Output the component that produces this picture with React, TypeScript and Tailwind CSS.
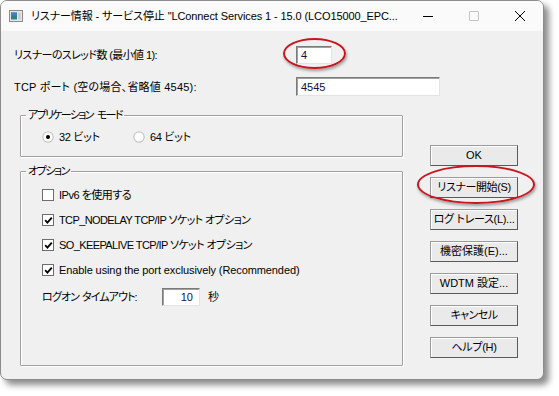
const font = "font-['Liberation_Sans','Noto_Sans_CJK_JP',sans-serif] [font-feature-settings:'palt']";

function TextBox({ value, className }: { value: string; className: string }) {
  return (
    <div
      className={`flex items-center bg-white border border-t-[#7a7a7a] border-l-[#7a7a7a] border-r-[#e3e3e3] border-b-[#e3e3e3] shadow-[inset_1px_1px_0_#a0a0a0] text-[11px] text-[#10104a] ${className}`}
    >
      {value}
    </div>
  );
}

function Radio({ checked }: { checked?: boolean }) {
  return (
    <svg width="12" height="12" viewBox="0 0 12 12" className="shrink-0">
      <circle cx="6" cy="6" r="5.5" fill="#a0a0a0" />
      <circle cx="6" cy="6" r="4.8" fill="#fff" stroke="#e3e3e3" strokeWidth="0.6" />
      {checked && <circle cx="6" cy="6" r="2" fill="#000" />}
    </svg>
  );
}

function Check({ checked }: { checked?: boolean }) {
  return (
    <div className="w-[12px] h-[12px] shrink-0 bg-white border border-[#6d6d6d] flex items-center justify-center">
      {checked && (
        <svg width="9" height="9" viewBox="0 0 9 9">
          <path d="M1.2 4.2 L3.4 6.6 L7.8 1.6" fill="none" stroke="#000" strokeWidth="1.8" />
        </svg>
      )}
    </div>
  );
}

function Btn({ label, tight }: { label: string; tight?: string }) {
  return (
    <button
      className={`h-[21px] w-[88px] bg-[#eaeaea] border border-[#9a9a9a] border-r-[#5a5a5a] border-b-[#5a5a5a] shadow-[inset_1px_1px_0_#fff] text-[11px] text-black leading-none whitespace-nowrap ${tight ?? ""}`}
    >
      {label}
    </button>
  );
}

export default function App() {
  return (
    <div className={`w-[559px] h-[396px] bg-white relative ${font}`}>
      <div className="w-[544px] h-[380px] rounded-[7px] border border-[#8c8c8c] bg-[#f0f0f0] overflow-hidden shadow-[5px_5px_6px_rgba(0,0,0,0.45)] flex flex-col">
        {/* タイトルバー */}
        <div className="h-[30px] bg-[#fafafa] flex items-center shrink-0">
          <svg width="14" height="12" viewBox="0 0 14 12" className="ml-[8px] mr-[8px]">
            <rect x="0.5" y="0.5" width="13" height="11" fill="#e8e8e8" stroke="#8a8a8a" />
            <rect x="2" y="2.5" width="6" height="7" fill="#2f7f8f" />
            <rect x="2" y="2.5" width="6" height="3" fill="#4a7cc4" />
            <rect x="9" y="2.5" width="3" height="7" fill="#cfcfcf" />
          </svg>
          <span className="text-[11px] tracking-[-0.1px] text-black whitespace-nowrap">
            リスナー情報 - サービス停止 "LConnect Services 1 - 15.0 (LCO15000_EPC...
          </span>
          <div className="ml-auto flex items-center h-full">
            <div className="w-[46px] h-full flex items-center justify-center">
              <div className="w-[10px] h-[1px] bg-black" />
            </div>
            <div className="w-[46px] h-full flex items-center justify-center">
              <div className="w-[10px] h-[10px] border border-[#c4c4c4] rounded-[1px]" />
            </div>
            <div className="w-[46px] h-full flex items-center justify-center">
              <svg width="12" height="12" viewBox="0 0 12 12">
                <path d="M1 1 L11 11 M11 1 L1 11" stroke="#000" strokeWidth="1" />
              </svg>
            </div>
          </div>
        </div>

        {/* 本体 */}
        <div className="flex flex-col text-[11px] text-black leading-[14px]">
          <div className="flex items-center mt-[15px] pl-[13px]">
            <span className="w-[282px] tracking-[-0.6px]">リスナーのスレッド数 (最小値 1):</span>
            <TextBox value="4" className="w-[36px] h-[18px] pl-[4px]" />
          </div>
          <div className="flex items-center mt-[13px] pl-[13px]">
            <span className="w-[282px] tracking-[0.2px]">TCP ポート (空の場合、省略値 4545):</span>
            <TextBox value="4545" className="w-[144px] h-[19px] pl-[4px]" />
          </div>

          <div className="flex mt-[12px]">
            <div className="ml-[19px] w-[383px] flex flex-col">
              <fieldset className="h-[49px] border border-[#a0a0a0] shadow-[inset_1px_1px_0_#fff,1px_1px_0_#fff] rounded-[1px] px-[21px]">
                <legend className="ml-[-16px] px-[2px] leading-[14px] tracking-[-1.7px]">
                  アプリケーション<span className="ml-[4px]">モード</span>
                </legend>
                <div className="flex items-center h-[14px] mt-[8px]">
                  <Radio checked />
                  <span className="ml-[5px] w-[74px] tracking-[-0.3px]">32 ビット</span>
                  <Radio />
                  <span className="ml-[5px] tracking-[-0.3px]">64 ビット</span>
                </div>
              </fieldset>

              <fieldset className="mt-[7px] h-[202px] border border-[#a0a0a0] shadow-[inset_1px_1px_0_#fff,1px_1px_0_#fff] rounded-[1px] px-[21px]">
                <legend className="ml-[-16px] px-[2px] leading-[14px] tracking-[-1.5px]">オプション</legend>
                <div className="flex flex-col mt-[10px] gap-[11px]">
                  <label className="flex items-center h-[14px] gap-[5px]">
                    <Check />
                    <span className="tracking-[-0.5px]">IPv6 を使用する</span>
                  </label>
                  <label className="flex items-center h-[14px] gap-[5px]">
                    <Check checked />
                    <span className="tracking-[-0.6px]">TCP_NODELAY TCP/IP ソケット オプション</span>
                  </label>
                  <label className="flex items-center h-[14px] gap-[5px]">
                    <Check checked />
                    <span className="tracking-[-0.6px]">SO_KEEPALIVE TCP/IP ソケット オプション</span>
                  </label>
                  <label className="flex items-center h-[14px] gap-[5px]">
                    <Check checked />
                    <span className="tracking-[-0.1px]">Enable using the port exclusively (Recommended)</span>
                  </label>
                  <div className="flex items-center h-[18px]">
                    <span className="w-[120px] tracking-[-0.9px]">
                      ログオン<span className="ml-[3px]">タイムアウト:</span>
                    </span>
                    <TextBox value="10" className="w-[38px] h-[18px] justify-end pr-[6px]" />
                    <span className="ml-[8px]">秒</span>
                  </div>
                </div>
              </fieldset>
            </div>

            <div className="ml-[27px] pt-[37px] flex flex-col gap-[11px]">
              <Btn label="OK" />
              <Btn label="リスナー開始(S)" tight="tracking-[-0.4px]" />
              <Btn label="ログ トレース(L)..." tight="tracking-[-0.3px]" />
              <Btn label="機密保護(E)..." />
              <Btn label="WDTM 設定..." />
              <Btn label="キャンセル" tight="tracking-[-0.6px]" />
              <Btn label="ヘルプ(H)" tight="tracking-[-0.3px]" />
            </div>
          </div>
        </div>
      </div>

      {/* 注釈の赤い楕円 */}
      <div className="absolute left-[283px] top-[38px] w-[63px] h-[31px] rounded-[50%] border-2 border-[#c8161e] shadow-[1px_2px_3px_rgba(0,0,0,0.35)]" />
      <div className="absolute left-[417px] top-[165px] w-[118px] h-[39px] rounded-[50%] border-2 border-[#c8161e] shadow-[1px_2px_3px_rgba(0,0,0,0.35)]" />
    </div>
  );
}
